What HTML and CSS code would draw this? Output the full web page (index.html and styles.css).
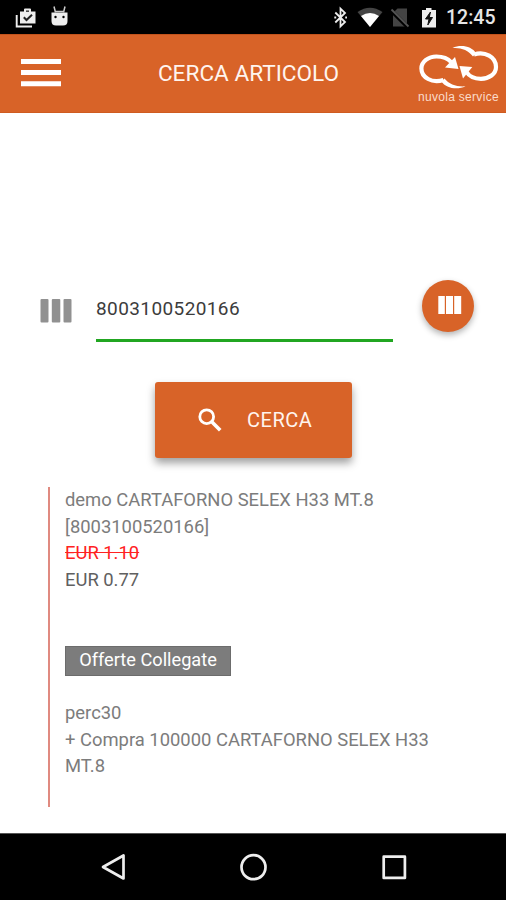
FILE: index.html
```html
<!DOCTYPE html>
<html lang="it">
<head>
<meta charset="utf-8">
<title>Cerca articolo</title>
<link rel="stylesheet" href="styles.css">
</head>
<body>
<div class="status">
  <svg class="status-left" width="56" height="34" viewBox="14 0 56 34">
    <path d="M20 11.5H24V9.5Q24 8.500 25 8.500H30Q31 8.500 31 9.500V11.500H35.500V23.500H20Z" fill="#eee"/>
    <path d="M26 10.500H29V11.800H26Z" fill="#222"/>
    <path d="M23.800 17.200L26.500 20L32 14.700" fill="none" stroke="#222" stroke-width="2"/>
    <path d="M16.700 15V26.500H32" fill="none" stroke="#eee" stroke-width="1.900"/>
    <path d="M51.500 12.500H67.500V21Q67.500 25.500 63 25.500H56Q51.500 25.500 51.500 21Z" fill="#eee"/>
    <path d="M54 6.500L55.500 12.500M65 6.500L63.500 12.500M55 11.500H64" stroke="#ccc" stroke-width="1.500"/>
    <circle cx="55.500" cy="17" r="1.200"/><circle cx="63.500" cy="17" r="1.200"/>
  </svg>
  <svg class="status-right" width="110" height="34" viewBox="330 0 110 34">
    <path d="M335.300 12.500L345 22L340.500 26.300V8.700L345 13L335.300 22.500" fill="none" stroke="#eee" stroke-width="1.800"/>
    <path d="M334.300 17.500H336.200M345.200 17.500H347" stroke="#eee" stroke-width="1.800"/>
    <path d="M357.500 12Q370 3.500 382.500 12L370 27Z" fill="#444"/>
    <path d="M361 16Q370 10 379 16L370 27Z" fill="#fff"/>
    <path d="M393 13L397.500 8.500H407V26.500H393Z" fill="#444"/>
    <path d="M390.500 9.800L408 27.300" stroke="#000" stroke-width="4"/>
    <path d="M391.500 9.500L408.500 26.500" stroke="#555" stroke-width="1.800"/>
    <path d="M422 10H426V8H431.500V10H436V27.500H422Z" fill="#eee"/>
    <path d="M430.500 12L425.500 19H429L427.800 25L432.500 17.500H429.200Z" fill="#111" stroke="#111"/>
  </svg>
  <span class="clock">12:45</span>
</div>

<header class="bar">
  <svg class="menu" width="42" height="30" viewBox="0 0 42 30">
    <path d="M1 3.400H41M1 14.500H41M1 25.700H41" stroke="#fff" stroke-width="5"/>
  </svg>
  <h1 class="title">CERCA ARTICOLO</h1>
  <div class="brand">
    <svg width="82" height="46" viewBox="418 44 82 46">
      <g fill="none" stroke="#fff" stroke-width="4.200">
        <path d="M474 54.500C485 51 496 57 496 67C496 74 489 78.800 481 78.800C474 78.800 469 76 466.500 72"/>
        <path d="M443.400 80C432 83.600 421.400 77.600 421.400 68.500C421.400 61.500 428.400 56.500 436.400 56.500C443 56.500 448 58.500 451 62"/>
      </g>
      <g fill="#fff">
        <path d="M452.500 48C461 43.800 472 46.500 476 53L473 56.500C468 50 461 47.300 452.500 48Z"/>
        <path d="M465.500 86.300C457 90.500 445.500 88 441.500 81.500L444.500 78.500C449 84.500 457 87 465.500 86.300Z"/>
        <path d="M455 57L458.500 69L445 67.500Z"/>
        <path d="M459.500 66L472.300 67L463 78.600Z"/>
      </g>
    </svg>
    <span class="brand-name">nuvola service</span>
  </div>
</header>

<main class="page">
  <div class="search">
    <svg class="code-icon" width="32" height="24" viewBox="0 0 32 24" fill="#919191">
      <rect x=".5" width="8" height="23.500" rx="1"/><rect x="11.800" width="8.500" height="23.500" rx="1"/><rect x="23.500" width="8" height="23.500" rx="1"/>
    </svg>
    <div class="field">8003100520166</div>
    <div class="scan">
      <svg width="24" height="18" viewBox="0 0 24 18" fill="#fff">
        <rect x=".3" width="6.500" height="18"/><rect x="8" width="7" height="18"/><rect x="16.200" width="7" height="18"/>
      </svg>
    </div>
  </div>

  <div class="submit">
    <svg width="24" height="24" viewBox="0 0 24 24" fill="none" stroke="#fff">
      <circle cx="8.700" cy="8.700" r="6.900" stroke-width="2.800"/>
      <path d="M14 14L22.200 22.200" stroke-width="3.600"/>
    </svg>
    <span>CERCA</span>
  </div>

  <section class="result">
    <div>demo CARTAFORNO SELEX H33 MT.8</div>
    <div>[8003100520166]</div>
    <div class="old">EUR 1.10</div>
    <div class="price">EUR 0.77</div>
    <div class="tag">Offerte Collegate</div>
    <div>perc30</div>
    <div class="offer">+ Compra 100000 CARTAFORNO SELEX H33 MT.8</div>
  </section>
</main>

<nav class="nav">
  <svg width="506" height="66" viewBox="0 0 506 66" fill="none" stroke="#eee" stroke-width="2.700" stroke-linejoin="round">
    <path d="M123.500 21.500V44.500L103 33Z"/>
    <circle cx="253.500" cy="33.200" r="12"/>
    <rect x="383.700" y="22.700" width="21.200" height="21.200"/>
  </svg>
</nav>
</body>
</html>
```
FILE: styles.css
```css
* { box-sizing: border-box; }
body {
  margin: 0;
  width: 506px;
  height: 900px;
  overflow: hidden;
  display: flex;
  flex-direction: column;
  background: #fff;
  font-family: Roboto, sans-serif;
}
svg { display: block; flex: none; }
.status {
  height: 34px;
  background: #000;
  display: flex;
  align-items: center;
  padding: 0 11px 0 14px;
}
.status-right { margin-left: auto; }
.clock {
  width: 55px;
  padding: 2px 0 0 6px;
  color: #e6e6e6;
  font-size: 19.500px;
  font-weight: 500;
  white-space: nowrap;
  line-height: 34px;
}
.bar {
  height: 79px;
  background: #d86328;
  border-top: 1px solid #c2531c;
  border-bottom: 1px solid #cf5b20;
  display: grid;
  grid-template-columns: 76px 1fr 88px;
}
.menu { margin: 23px 0 0 20px; }
.title {
  margin: 0;
  padding-left: 3px;
  font-size: 22.600px;
  font-weight: 400;
  line-height: 77px;
  color: #fff4ee;
  text-align: center;
}
.brand { padding-top: 9px; }
.brand-name {
  display: block;
  font-family: "Liberation Sans", sans-serif;
  font-size: 12px;
  letter-spacing: .3px;
  line-height: 14px;
  color: #fbdccb;
  white-space: nowrap;
}
.page { flex: 1; padding: 167px 0 0; }
.search { display: flex; height: 62px; }
.code-icon { margin: 19px 0 0 40px; }
.field {
  width: 297px;
  margin-left: 24px;
  border-bottom: 3px solid #21a621;
  font-size: 19px;
  letter-spacing: .4px;
  line-height: 57px;
  color: #3c3c3c;
}
.scan {
  width: 52px;
  height: 52px;
  margin-left: 29px;
  border-radius: 50%;
  background: #d86328;
  box-shadow: 0 3px 6px rgba(0,0,0,.3);
  padding: 16px 0 0 16px;
}
.submit {
  width: 197px;
  height: 76px;
  margin: 40px 0 0 155px;
  border-radius: 3px;
  background: #d86328;
  box-shadow: 0 5px 9px rgba(0,0,0,.38);
  display: flex;
  align-items: center;
  padding-left: 43px;
  gap: 25px;
  color: #fff4ee;
  font-size: 20px;
  letter-spacing: .5px;
}
.result {
  margin: 29px 0 0 48px;
  width: 400px;
  height: 320px;
  border-left: 2px solid #e08a80;
  padding-left: 15px;
  font-size: 18.400px;
  line-height: 26.700px;
  color: #7c7c7c;
}
.old { color: #f22; text-decoration: line-through; }
.price { color: #606060; }
.tag {
  width: 166px;
  height: 30px;
  margin: 52px 0 24px;
  background: #7c7c7c;
  border: 1px solid #6c6c6c;
  color: #fff;
  font-size: 18.200px;
  text-align: center;
  line-height: 26px;
}
.nav { height: 67px; background: #000; border-top: 1px solid #555; }
```
